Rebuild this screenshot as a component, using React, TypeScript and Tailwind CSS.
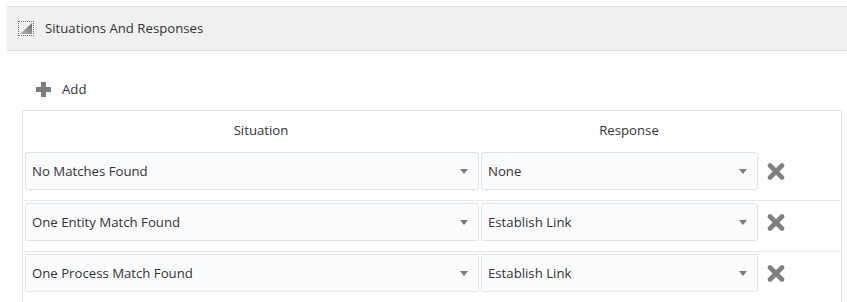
import React from "react";

const font = { fontFamily: '"Segoe UI", "Open Sans", "Noto Sans", sans-serif' };

function Arrow() {
  return (
    <svg width="8" height="5" viewBox="0 0 8 5" className="shrink-0">
      <polygon points="0,0 8,0 4,5" fill="#7b7b7b" />
    </svg>
  );
}

function Select({ value, w }: { value: string; w: string }) {
  return (
    <div
      className={`${w} h-[38px] shrink-0 flex items-center justify-between pl-[6px] pr-[10px] border border-[#dde3e8] rounded-[3px] bg-[#fbfcfd] text-[13.2px] text-[#333333]`}
    >
      <span className="pt-[2px]">{value}</span>
      <Arrow />
    </div>
  );
}

function XIcon() {
  return (
    <svg width="18" height="17" viewBox="0 0 18 17" className="shrink-0">
      <path d="M3 2.5 L15 14.5 M15 2.5 L3 14.5" stroke="#808080" strokeWidth="4.6" strokeLinecap="round" />
    </svg>
  );
}

const rows = [
  ["No Matches Found", "None"],
  ["One Entity Match Found", "Establish Link"],
  ["One Process Match Found", "Establish Link"],
];

export default function App() {
  return (
    <div className="w-[847px] h-[302px] bg-white overflow-hidden" style={font}>
      <div className="pt-[6px] pl-[7px]">
        <div className="h-[45px] border-y border-[#d6dfe6] bg-[#f0f0f0] flex items-center">
          <div className="ml-[11px] w-[16px] h-[15px] border border-dotted border-[#6f6f6f] flex items-center justify-center">
            <svg width="12" height="11" viewBox="0 0 12 11">
              <defs>
                <linearGradient id="tg" x1="0" y1="1" x2="1" y2="0">
                  <stop offset="0" stopColor="#b8b8b8" />
                  <stop offset="1" stopColor="#6d6d6d" />
                </linearGradient>
              </defs>
              <polygon points="0,11 12,11 12,0" fill="url(#tg)" />
            </svg>
          </div>
          <span className="ml-[11px] text-[13.2px] text-[#333333]">Situations And Responses</span>
        </div>
      </div>
      <div className="h-[59px] pt-[30px] pl-[36px]">
        <div className="flex items-center h-[16px]">
          <svg width="15" height="15" viewBox="0 0 15 15">
            <rect x="5" y="0" width="5" height="15" fill="#7c7c7c" />
            <rect x="0" y="5" width="15" height="5" fill="#7c7c7c" />
          </svg>
          <span className="ml-[11px] pt-[1px] text-[13.2px] text-[#333333]">Add</span>
        </div>
      </div>
      <div className="ml-[22px] w-[820px] border-x border-t border-[#dde3e8]">
        <div className="h-[39px] flex items-center pt-[1px] text-[13.2px] text-[#333333]">
          <div className="w-[476px] text-center">Situation</div>
          <div className="w-[260px] text-center">Response</div>
        </div>
        {rows.map(([s, r], i) => (
          <div key={i} className="pt-[2px] pb-[10px] pl-[2px] border-b border-[#e4e8ec] flex items-center">
            <Select value={s} w="w-[454px]" />
            <div className="w-[2px] shrink-0" />
            <Select value={r} w="w-[277px]" />
            <div className="ml-[9px]">
              <XIcon />
            </div>
          </div>
        ))}
      </div>
    </div>
  );
}
